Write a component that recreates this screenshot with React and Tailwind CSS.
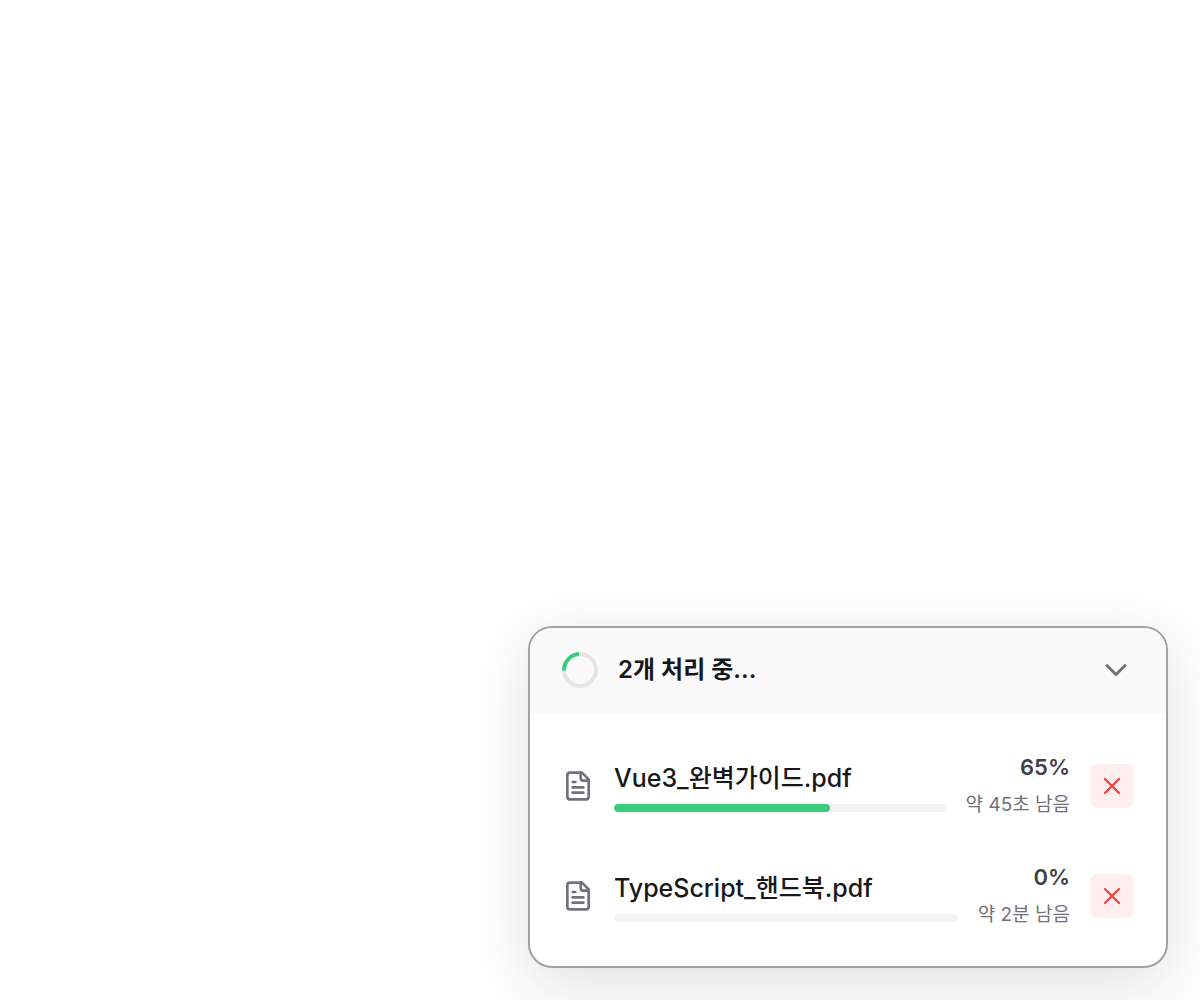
import React from 'react';

const jobs = [
  { id: 1, name: 'Vue3_완벽가이드.pdf', percent: 65, remaining: '약 45초 남음' },
  { id: 2, name: 'TypeScript_핸드북.pdf', percent: 0, remaining: '약 2분 남음' },
];

function FileIcon() {
  return (
    <svg className="w-8 h-8 shrink-0 text-[#71717a]" viewBox="0 0 24 24" fill="none" stroke="currentColor" strokeWidth="2" strokeLinecap="round" strokeLinejoin="round" aria-hidden="true">
      <path d="M15 2H6a2 2 0 0 0-2 2v16a2 2 0 0 0 2 2h12a2 2 0 0 0 2-2V7Z" />
      <path d="M14 2v4a2 2 0 0 0 2 2h4" />
      <path d="M10 9H8" />
      <path d="M16 13H8" />
      <path d="M16 17H8" />
    </svg>
  );
}

function Job({ job }) {
  return (
    <li className="flex items-center gap-5 px-8 py-5">
      <FileIcon />
      <div className="flex-1 min-w-0">
        <p className="text-[25px] leading-9 font-medium text-[#18181b] truncate">{job.name}</p>
        <div
          role="progressbar"
          aria-label={job.name}
          aria-valuenow={job.percent}
          className="mt-2 h-2 rounded-full bg-[#f4f4f5] overflow-hidden"
        >
          <div className="h-full rounded-full bg-[#3bcb7c]" style={{ width: `${job.percent}%` }} />
        </div>
      </div>
      <div className="flex flex-col items-end gap-1.5 shrink-0">
        <span className="text-[22px] leading-8 font-semibold text-[#3f3f46]">{job.percent}%</span>
        <span className="text-[19px] leading-8 text-[#71717a]">{job.remaining}</span>
      </div>
      <button type="button" aria-label="취소" className="flex items-center justify-center w-11 h-11 shrink-0 rounded-lg bg-[#feeeee] text-[#ef4444]">
        <svg className="w-7 h-7" viewBox="0 0 24 24" fill="none" stroke="currentColor" strokeWidth="2" strokeLinecap="round" strokeLinejoin="round" aria-hidden="true">
          <path d="M18 6 6 18" />
          <path d="m6 6 12 12" />
        </svg>
      </button>
    </li>
  );
}

export default function App() {
  return (
    <main className="min-h-screen flex items-end justify-end p-8 bg-white font-['Inter','Noto_Sans_CJK_KR',sans-serif]">
      <section className="w-full max-w-[640px] rounded-3xl border-2 border-[#a1a1aa] bg-white overflow-hidden shadow-[0_16px_64px_rgba(0,0,0,0.12)]">
        <header className="flex items-center gap-5 px-8 py-6 bg-[#fafafa] border-b-2 border-[#fafafa]">
          <div className="w-9 h-9 shrink-0 rounded-full border-4 border-[#e4e4e4] border-t-[#3bcb7c] rotate-[-48deg]" />
          <h2 className="flex-1 text-2xl leading-9 font-semibold text-[#18181b]">2개 처리 중...</h2>
          <button type="button" aria-label="접기" className="text-[#71717a]">
            <svg className="w-9 h-9" viewBox="0 0 24 24" fill="none" stroke="currentColor" strokeWidth="2" strokeLinecap="round" strokeLinejoin="round" aria-hidden="true">
              <path d="m6 9 6 6 6-6" />
            </svg>
          </button>
        </header>
        <ul className="pt-[17px] pb-[15px]">
          {jobs.map((job) => <Job key={job.id} job={job} />)}
        </ul>
      </section>
    </main>
  );
}
